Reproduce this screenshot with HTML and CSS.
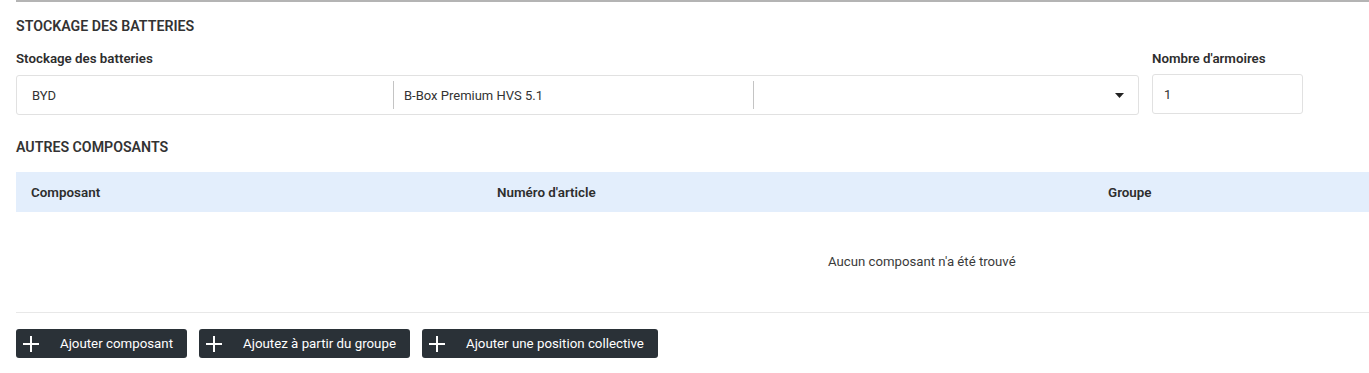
FILE: index.html
```html
<!DOCTYPE html>
<html lang="fr">
<head>
<meta charset="utf-8">
<link rel="stylesheet" href="styles.css">
</head>
<body>
<div class="page">
  <section class="section">
    <h2 class="section-title">STOCKAGE DES BATTERIES</h2>
    <div class="form-row">
      <div class="field field-storage">
        <label class="field-label">Stockage des batteries</label>
        <div class="multi-select">
          <div class="seg seg-1">BYD</div>
          <div class="seg seg-2">B-Box Premium HVS 5.1</div>
          <div class="seg seg-3">
            <svg class="caret" width="9" height="5" viewBox="0 0 9 5"><path d="M0 0H9L4.5 5Z" fill="#222"/></svg>
          </div>
        </div>
      </div>
      <div class="field field-count">
        <label class="field-label">Nombre d'armoires</label>
        <div class="text-input">1</div>
      </div>
    </div>
  </section>

  <section class="section">
    <h2 class="section-title title-2">AUTRES COMPOSANTS</h2>
    <div class="table">
      <div class="thead">
        <div class="th th-1">Composant</div>
        <div class="th th-2">Numéro d'article</div>
        <div class="th th-3">Groupe</div>
      </div>
      <div class="empty">Aucun composant n'a été trouvé</div>
    </div>
    <div class="actions">
      <button class="btn"><span class="plus"></span><span class="btn-text">Ajouter composant</span></button>
      <button class="btn"><span class="plus"></span><span class="btn-text">Ajoutez à partir du groupe</span></button>
      <button class="btn"><span class="plus"></span><span class="btn-text">Ajouter une position collective</span></button>
    </div>
  </section>
</div>
</body>
</html>
```
FILE: styles.css
```css
html, body {
  margin: 0;
  padding: 0;
  background: #ffffff;
}
body {
  font-family: Roboto, "Liberation Sans", sans-serif;
  color: #2d2d2d;
  overflow: hidden;
}
.page {
  margin-left: 16px;
  border-top: 2px solid #b4b4b4;
}
.section-title {
  margin: 0;
  padding-top: 16px;
  font-size: 14.2px;
  line-height: 16px;
  font-weight: 600;
  color: #333;
}
.form-row {
  display: flex;
  gap: 13px;
  margin-top: 17px;
  align-items: flex-start;
}
.field {
  display: flex;
  flex-direction: column;
}
.field-label {
  font-size: 13.3px;
  line-height: 16px;
  font-weight: 600;
  color: #2d2d2d;
  margin-bottom: 7px;
}
.field-storage { width: 1123px; }
.field-count { width: 151px; }
.multi-select {
  display: flex;
  height: 40px;
  border: 1px solid #e1e1e1;
  border-radius: 3px;
  box-sizing: border-box;
  margin-top: 1px;
}
.seg {
  display: flex;
  align-items: center;
  font-size: 13px;
  color: #333;
}
.seg-1 { width: 361px; padding-left: 15px; }
.seg-2 {
  width: 349px;
  padding-left: 10px;
  border-left: 1px solid #c4c4c4;
  margin: 5px 0;
}
.seg-3 {
  flex: 1;
  border-left: 1px solid #c4c4c4;
  margin: 5px 0;
  justify-content: flex-end;
  padding-right: 14px;
}
.caret { display: block; }
.text-input {
  height: 40px;
  box-sizing: border-box;
  border: 1px solid #e1e1e1;
  border-radius: 3px;
  display: flex;
  align-items: center;
  padding-left: 11px;
  font-size: 13px;
  color: #333;
}
.title-2 { padding-top: 24px; }
.table { margin-top: 17px; }
.thead {
  display: flex;
  height: 40px;
  align-items: center;
  background: #e3eefc;
  font-size: 13.4px;
  font-weight: 600;
  color: #2d2d2d;
}
.th-1 { width: 466px; padding-left: 15px; }
.th-2 { width: 611px; }
.th-3 { flex: 1; }
.empty {
  height: 101px;
  box-sizing: border-box;
  padding-left: 812px;
  padding-top: 42px;
  font-size: 13.2px;
  line-height: 16px;
  color: #3a3a3a;
  border-bottom: 1px solid #e8e8e8;
}
.actions {
  display: flex;
  gap: 12px;
  margin-top: 16px;
}
.btn {
  display: flex;
  align-items: center;
  height: 29px;
  padding: 0 14px 0 7px;
  background: #2a3137;
  color: #fff;
  border: none;
  border-radius: 3px;
  font-family: Roboto, "Liberation Sans", sans-serif;
  font-size: 13.3px;
  cursor: pointer;
}
.plus {
  position: relative;
  width: 16px;
  height: 16px;
  margin-right: 21px;
}
.plus::before, .plus::after {
  content: "";
  position: absolute;
  background: #fff;
}
.plus::before { left: 0; right: 0; top: 7px; height: 2px; }
.plus::after { top: 0; bottom: 0; left: 7px; width: 2px; }
```
